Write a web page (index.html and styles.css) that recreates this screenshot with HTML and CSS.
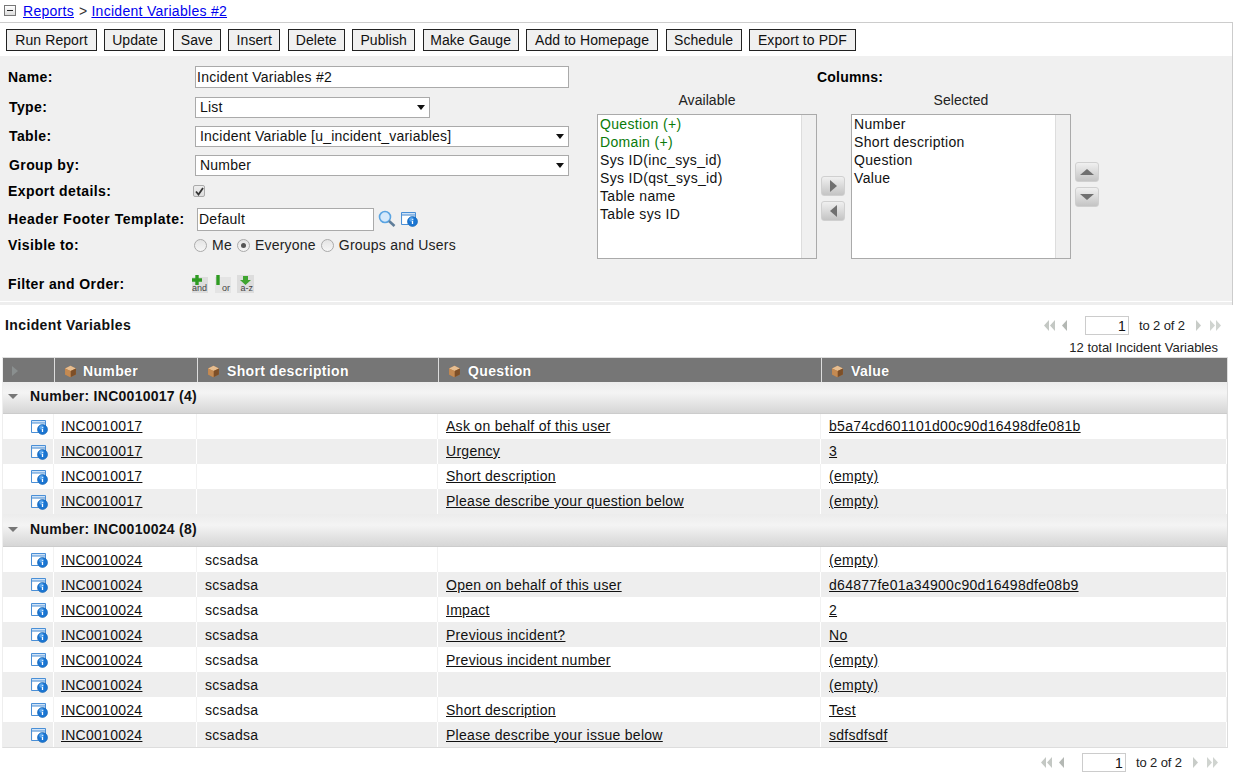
FILE: index.html
```html
<!DOCTYPE html>
<html lang="en">
<head>
<meta charset="utf-8">
<title>Incident Variables #2</title>
<link rel="stylesheet" href="styles.css">
</head>
<body>
<svg class="defs" width="0" height="0" aria-hidden="true">
  <symbol id="info" viewBox="0 0 18 16">
    <path d="M1.500 1.500h14v2.500h-14z" fill="#cfe3f7" stroke="#4a8fd6"/>
    <path d="M1.500 4v9.500h7M15.500 4v3" fill="none" stroke="#4a8fd6"/>
    <path d="M2.500 5h12v2h-5l-3 6h-4z" fill="#fff"/>
    <circle cx="12.500" cy="10.500" r="5" fill="#1a75d2" stroke="#0f5fb0" stroke-width=".6"/>
    <circle cx="11.500" cy="8.500" r="2.200" fill="#5ba6ec"/>
    <path d="M12.500 8.200v.9M12.500 10v3" stroke="#fff" stroke-width="1.300"/>
  </symbol>
  <symbol id="cube" viewBox="0 0 12 12">
    <path d="M6 .8l5 2.400v5.600l-5 2.600-5-2.600V3.200z" fill="#b9804a"/>
    <path d="M6 .8l5 2.400L6 5.600 1 3.200z" fill="#e6bd90"/>
    <path d="M6 5.600l5-2.400v5.600l-5 2.600z" fill="#7d4f28"/>
    <path d="M1 3.200l5 2.400v5.800l-5-2.600z" fill="#c48a52"/>
  </symbol>
  <symbol id="first" viewBox="0 0 13 13"><path d="M6 1v11L1 6.500zM12 1v11L7 6.500z" fill="#c4c8c4"/></symbol>
  <symbol id="prev" viewBox="0 0 7 13"><path d="M6 1v11L1 6.500z" fill="#b4b8b4"/></symbol>
  <symbol id="next" viewBox="0 0 7 13"><path d="M1 1v11l5-5.500z" fill="#c8ccc8"/></symbol>
  <symbol id="last" viewBox="0 0 13 13"><path d="M1 1v11l5-5.500zM7 1v11l5-5.500z" fill="#d0d4d0"/></symbol>
</svg>

<nav class="crumbs">
  <span class="collapse"></span>
  <a href="#">Reports</a> <span class="crumb-sep">&gt;</span> <a href="#">Incident Variables #2</a>
</nav>

<section class="panel">
  <div class="toolbar">
    <button class="btn">Run Report</button>
    <button class="btn">Update</button>
    <button class="btn">Save</button>
    <button class="btn">Insert</button>
    <button class="btn">Delete</button>
    <button class="btn">Publish</button>
    <button class="btn">Make Gauge</button>
    <button class="btn">Add to Homepage</button>
    <button class="btn">Schedule</button>
    <button class="btn">Export to PDF</button>
  </div>
  <div class="form">
    <div class="fields">
      <div class="row row-name"><label class="lbl">Name:</label><input class="text text-name" value="Incident Variables #2"></div>
      <div class="row row-type"><label class="lbl lbl-in">Type:</label><div class="sel sel-short"><select><option>List</option></select></div></div>
      <div class="row row-table"><label class="lbl lbl-in">Table:</label><div class="sel"><select><option>Incident Variable [u_incident_variables]</option></select></div></div>
      <div class="row row-group"><label class="lbl lbl-in">Group by:</label><div class="sel"><select><option>Number</option></select></div></div>
      <div class="row row-export"><label class="lbl">Export details:</label>
        <span class="check"><svg width="9" height="9" viewBox="0 0 9 9"><path d="M1 4.500l2.500 3L8 1" fill="none" stroke="#333" stroke-width="1.800"/></svg></span></div>
      <div class="row row-header"><label class="lbl lbl-wide">Header Footer Template:</label><input class="text text-hf" value="Default">
        <svg class="magnifier" width="18" height="18" viewBox="0 0 18 18"><circle cx="7" cy="7" r="5.500" fill="#d5e9fb" stroke="#5aa4e2" stroke-width="1.600"/><path d="M11 11l5.500 5" stroke="#5f7d99" stroke-width="2.600"/></svg>
        <svg class="ico-info ico-hf" width="18" height="16"><use href="#info"/></svg></div>
      <div class="row row-visible"><label class="lbl">Visible to:</label>
        <div class="radios">
          <span class="radio"></span><span class="radio-text">Me</span>
          <span class="radio on"></span><span class="radio-text">Everyone</span>
          <span class="radio"></span><span class="radio-text">Groups and Users</span>
        </div></div>
      <div class="row row-filter"><label class="lbl">Filter and Order:</label>
        <div class="filters">
          <span class="fbtn"><svg width="17" height="18" viewBox="0 0 17 18"><rect x="1" y="2" width="16" height="16" fill="#ddd"/><path d="M6 0v10M1 5h10" stroke="#2e9b22" stroke-width="3.400"/></svg><em class="ftext">and</em></span>
          <span class="fbtn"><svg width="17" height="18" viewBox="0 0 17 18"><rect x="1" y="2" width="16" height="16" fill="#e4e4e4"/><path d="M4 0v10" stroke="#2e9b22" stroke-width="3.400"/></svg><em class="ftext">or</em></span>
          <span class="fbtn"><svg width="17" height="18" viewBox="0 0 17 18"><rect x="0" y="0" width="17" height="18" fill="#ddd"/><path d="M6 1h5v4h3l-5.500 5L3 5h3z" fill="#3fa52f"/></svg><em class="ftext">a-z</em></span>
        </div></div>
    </div>
    <div class="columns">
      <div class="cols-title">Columns:</div>
      <div class="cols-body">
        <div class="col-box">
          <div class="col-head">Available</div>
          <div class="listbox"><ul class="list">
            <li class="green">Question (+)</li>
            <li class="green">Domain (+)</li>
            <li>Sys ID(inc_sys_id)</li>
            <li>Sys ID(qst_sys_id)</li>
            <li>Table name</li>
            <li>Table sys ID</li>
          </ul><div class="track"></div></div>
        </div>
        <div class="mover mover-mid">
          <span class="sq"><i class="tri tri-r"></i></span>
          <span class="sq"><i class="tri tri-l"></i></span>
        </div>
        <div class="col-box">
          <div class="col-head">Selected</div>
          <div class="listbox"><ul class="list">
            <li>Number</li>
            <li>Short description</li>
            <li>Question</li>
            <li>Value</li>
          </ul><div class="track"></div></div>
        </div>
        <div class="mover mover-end">
          <span class="sq"><i class="tri tri-u"></i></span>
          <span class="sq"><i class="tri tri-d"></i></span>
        </div>
      </div>
    </div>
  </div>
  <div class="panel-foot"></div>
</section>

<section class="report">
  <div class="report-top">
    <h2 class="report-title">Incident Variables</h2>
    <div class="report-meta">
      <div class="pager">
        <svg class="pg" width="13" height="13"><use href="#first"/></svg>
        <svg class="pg pg-prev" width="7" height="13"><use href="#prev"/></svg>
        <input class="pg-input" value="1">
        <span class="pg-text">to 2 of 2</span>
        <svg class="pg pg-next" width="7" height="13"><use href="#next"/></svg>
        <svg class="pg pg-last" width="13" height="13"><use href="#last"/></svg>
      </div>
      <div class="total">12 total Incident Variables</div>
    </div>
  </div>

  <table class="grid">
    <colgroup><col class="c0"><col class="c1"><col class="c2"><col class="c3"><col class="c4"></colgroup>
    <thead>
      <tr>
        <th><i class="tri tri-head"></i></th>
        <th class="th-number"><svg class="cube" width="13" height="13"><use href="#cube"/></svg>Number</th>
        <th><svg class="cube" width="13" height="13"><use href="#cube"/></svg>Short description</th>
        <th><svg class="cube" width="13" height="13"><use href="#cube"/></svg>Question</th>
        <th><svg class="cube" width="13" height="13"><use href="#cube"/></svg>Value</th>
      </tr>
    </thead>
    <tbody>
      <tr class="group group-first"><td colspan="5"><i class="tri tri-group"></i>Number: INC0010017 (4)</td></tr>
      <tr><td class="ic"><svg width="18" height="16"><use href="#info"/></svg></td><td class="num"><a href="#">INC0010017</a></td><td></td><td><a href="#">Ask on behalf of this user</a></td><td><a href="#">b5a74cd601101d00c90d16498dfe081b</a></td></tr>
      <tr class="alt"><td class="ic"><svg width="18" height="16"><use href="#info"/></svg></td><td class="num"><a href="#">INC0010017</a></td><td></td><td><a href="#">Urgency</a></td><td><a href="#">3</a></td></tr>
      <tr><td class="ic"><svg width="18" height="16"><use href="#info"/></svg></td><td class="num"><a href="#">INC0010017</a></td><td></td><td><a href="#">Short description</a></td><td><a href="#">(empty)</a></td></tr>
      <tr class="alt"><td class="ic"><svg width="18" height="16"><use href="#info"/></svg></td><td class="num"><a href="#">INC0010017</a></td><td></td><td><a href="#">Please describe your question below</a></td><td><a href="#">(empty)</a></td></tr>
    </tbody>
    <tbody class="block-b">
      <tr class="group"><td colspan="5"><i class="tri tri-group"></i>Number: INC0010024 (8)</td></tr>
      <tr><td class="ic"><svg width="18" height="16"><use href="#info"/></svg></td><td class="num"><a href="#">INC0010024</a></td><td>scsadsa</td><td></td><td><a href="#">(empty)</a></td></tr>
      <tr class="alt"><td class="ic"><svg width="18" height="16"><use href="#info"/></svg></td><td class="num"><a href="#">INC0010024</a></td><td>scsadsa</td><td><a href="#">Open on behalf of this user</a></td><td><a href="#">d64877fe01a34900c90d16498dfe08b9</a></td></tr>
      <tr><td class="ic"><svg width="18" height="16"><use href="#info"/></svg></td><td class="num"><a href="#">INC0010024</a></td><td>scsadsa</td><td><a href="#">Impact</a></td><td><a href="#">2</a></td></tr>
      <tr class="alt"><td class="ic"><svg width="18" height="16"><use href="#info"/></svg></td><td class="num"><a href="#">INC0010024</a></td><td>scsadsa</td><td><a href="#">Previous incident?</a></td><td><a href="#">No</a></td></tr>
      <tr><td class="ic"><svg width="18" height="16"><use href="#info"/></svg></td><td class="num"><a href="#">INC0010024</a></td><td>scsadsa</td><td><a href="#">Previous incident number</a></td><td><a href="#">(empty)</a></td></tr>
      <tr class="alt"><td class="ic"><svg width="18" height="16"><use href="#info"/></svg></td><td class="num"><a href="#">INC0010024</a></td><td>scsadsa</td><td></td><td><a href="#">(empty)</a></td></tr>
      <tr><td class="ic"><svg width="18" height="16"><use href="#info"/></svg></td><td class="num"><a href="#">INC0010024</a></td><td>scsadsa</td><td><a href="#">Short description</a></td><td><a href="#">Test</a></td></tr>
      <tr class="alt"><td class="ic"><svg width="18" height="16"><use href="#info"/></svg></td><td class="num"><a href="#">INC0010024</a></td><td>scsadsa</td><td><a href="#">Please describe your issue below</a></td><td><a href="#">sdfsdfsdf</a></td></tr>
    </tbody>
  </table>

  <div class="pager pager-bottom">
    <svg class="pg" width="13" height="13"><use href="#first"/></svg>
    <svg class="pg pg-prev" width="7" height="13"><use href="#prev"/></svg>
    <input class="pg-input" value="1">
    <span class="pg-text">to 2 of 2</span>
    <svg class="pg pg-next" width="7" height="13"><use href="#next"/></svg>
    <svg class="pg pg-last" width="13" height="13"><use href="#last"/></svg>
  </div>
</section>
</body>
</html>
```
FILE: styles.css
```css
* { box-sizing: border-box; }
html, body { margin: 0; padding: 0; background: #fff; }
body { font: 14px/16px "Liberation Sans", Arial, sans-serif; letter-spacing: .28px; color: #000; overflow: hidden; height: 779px; }
.defs { position: absolute; }
a { color: inherit; }

.crumbs { height: 22px; display: flex; align-items: center; padding: 0 0 1px 4px; white-space: pre; }
.crumbs a { color: #00e; }
.crumb-sep { margin: 0 4px 0 5px; color: #333; }
.collapse { width: 12px; height: 11px; margin-right: 7px; border: 1px solid #777; background: linear-gradient(#fff, #ddd); position: relative; }
.collapse::after { content: ""; position: absolute; left: 2px; top: 4px; width: 6px; height: 1px; background: #222; }

.panel { width: 1233px; border-top: 1px solid #ccc; border-right: 1px solid #ccc; }
.toolbar { height: 33px; padding: 6px 0 0 6px; display: grid; grid-template-columns: 91px 61px 48px 52px 57px 63px 96px 132px 76px 107px; column-gap: 7.440px; align-items: start; background: #fff; }
.btn { height: 22px; padding: 0; border: 1px solid #222; background: #f0f0f0; font: 14px/18px "Liberation Sans", Arial, sans-serif; letter-spacing: .08px; color: #111; white-space: nowrap; }

.form { height: 245px; background: #f0f0f0; display: flex; }
.fields { width: 597px; padding-left: 8px; flex: none; }
.row { display: flex; align-items: center; }
.lbl { width: 187px; flex: none; font-weight: bold; white-space: nowrap; letter-spacing: .4px; }
.lbl-wide { letter-spacing: .56px; }
.lbl-in { padding-left: 1px; }
.row-name { height: 34px; padding-top: 8px; }
.row-type { height: 34px; }
.row-table { height: 24px; }
.row-group { height: 34px; }
.row-export { height: 18px; }
.row-header { height: 38px; }
.row-visible { height: 14px; }
.row-filter { height: 49px; padding-top: 15px; }
.text { height: 22px; border: 1px solid #aaa; background: #fff; padding: 0 1px; font: 14px "Liberation Sans", Arial, sans-serif; letter-spacing: .25px; color: #111; }
.text-name { width: 374px; }
.text-hf { width: 177px; height: 23px; margin-left: 2px; }
.sel { width: 374px; height: 21px; position: relative; }
.sel-short { width: 235px; }
.sel select { appearance: none; width: 100%; height: 100%; border: 1px solid #aaa; border-radius: 0; background: #fff; padding: 0 0 0 4px; font: 14px "Liberation Sans", Arial, sans-serif; letter-spacing: .22px; color: #111; }
.sel::after { content: ""; position: absolute; right: 5px; top: 8px; border: 4px solid transparent; border-top: 5px solid #111; border-bottom: 0; }
.check { width: 12px; height: 12px; margin-left: -2px; border: 1px solid #aaa; border-radius: 2px; background: linear-gradient(#eee, #ddd); display: flex; align-items: center; justify-content: center; }
.magnifier { margin-left: 4px; }
.ico-hf { margin-left: 4px; }
.radios { display: flex; align-items: center; margin-left: -1px; color: #222; letter-spacing: .22px; }
.radio { width: 13px; height: 13px; border: 1px solid #aaa; border-radius: 50%; background: linear-gradient(#e4e4e4, #f6f6f6); margin-right: 5px; position: relative; }
.radio.on::after { content: ""; position: absolute; left: 3px; top: 3px; width: 5px; height: 5px; border-radius: 50%; background: #555; }
.radio-text { margin-right: 5px; }
.filters { display: flex; gap: 6px; margin-left: -4px; }
.fbtn { width: 17px; height: 18px; position: relative; display: block; }
.fbtn svg { display: block; }
.ftext { position: absolute; font: 9px/9px "Liberation Sans", sans-serif; letter-spacing: 0; color: #444; right: 1px; bottom: 0; }

.columns { flex: 1; display: flex; flex-direction: column; }
.cols-title { font-weight: bold; padding-left: 220px; height: 36px; padding-top: 13px; letter-spacing: .2px; }
.cols-body { display: flex; align-items: flex-start; }
.col-box { width: 220px; flex: none; }
.col-head { text-align: center; height: 22px; color: #222; line-height: 16px; letter-spacing: .05px; }
.listbox { height: 145px; border: 1px solid #aaa; background: #fff; display: flex; }
.list { list-style: none; margin: 0; padding: 0 0 0 2px; flex: 1; line-height: 18px; color: #111; letter-spacing: .33px; }
.green { color: #0a7a0a; }
.track { width: 15px; background: #f0f0f0; border-left: 1px solid #ddd; }
.mover { width: 34px; flex: none; display: flex; flex-direction: column; gap: 5px; padding-left: 4px; }
.mover-mid { padding-top: 84px; }
.mover-end { padding-top: 70px; }
.sq { width: 24px; height: 20px; border: 1px solid #d0d0d0; border-radius: 3px; background: linear-gradient(#f0f0f0, #c4c4c4); display: flex; align-items: center; justify-content: center; }
.tri { display: block; width: 0; height: 0; border-style: solid; border-color: transparent; }
.tri-r { border-width: 6px 0 6px 7px; border-left-color: #707070; }
.tri-l { border-width: 6px 7px 6px 0; border-right-color: #707070; }
.tri-u { border-width: 0 7px 6px; border-bottom-color: #707070; }
.tri-d { border-width: 6px 7px 0; border-top-color: #707070; }

.panel-foot { height: 4px; background: #eee; border-top: 1px solid #fff; }

.report-top { height: 52px; display: flex; justify-content: space-between; }
.report-title { margin: 0; padding: 12px 0 0 5px; font-size: 14px; line-height: 16px; font-weight: bold; color: #111; letter-spacing: .39px; }
.report-meta { width: 180px; margin-right: 15px; padding-top: 11px; display: flex; flex-direction: column; align-items: flex-end; }
.pager { display: flex; align-items: center; color: #222; height: 19px; }
.pg { flex: none; display: block; }
.pg-prev { margin-left: 5px; }
.pg-next { margin-left: 10px; }
.pg-last { margin-left: 7px; }
.pg-input { width: 44px; height: 19px; margin: 0 10px 0 17px; border: 1px solid #ccc; background: #fff; padding: 0 2px; text-align: right; font: 14px "Liberation Sans", Arial, sans-serif; color: #111; }
.pg-text { font-size: 13px; letter-spacing: -.1px; white-space: nowrap; }
.total { margin: 5px 4px 0 0; font-size: 13px; letter-spacing: 0; color: #222; white-space: nowrap; }

.grid { margin-left: 2px; width: 1226px; table-layout: fixed; border-collapse: separate; border-spacing: 0; border-top: 1px solid #ddd; border-bottom: 1px solid #ddd; border-right: 1px solid #ddd; border-left: 1px solid #eee; }
.c0 { width: 51px; }
.c1 { width: 143px; }
.c2 { width: 241px; }
.c3 { width: 383px; }
.grid th { height: 24px; background: #767676; color: #fff; font-weight: bold; text-align: left; padding: 1px 0 0 9px; border-left: 1px solid #ddd; white-space: nowrap; text-shadow: 0 0 1px #555; letter-spacing: .35px; }
.grid th:first-child { border-left: 0; padding-left: 9px; }
.cube { margin-right: 7px; vertical-align: -2px; }
.th-number .cube { margin-right: 6px; }
.tri-head { border-width: 5px 0 5px 6px; border-left-color: #8a8f8f; }
.grid td { height: 25px; padding: 0 0 1px 8px; border-right: 1px solid #f2f2f2; color: #111; white-space: nowrap; overflow: hidden; }
.grid td.num { padding-left: 7px; }
.grid .block-b td { padding-bottom: 0; }
.grid td.ic, .grid .block-b td.ic { padding: 1px 0 0 27px; line-height: 0; }
.alt td { background: #eee; border-right-color: #fff; }
.grid .group td, .grid .block-b .group td { height: 33px; padding: 0 0 3px 5px; background: linear-gradient(#ececec, #f4f4f4 35%, #d6d6d6); border-right: 0; border-bottom: 1px solid #ccc; font-weight: bold; color: #111; letter-spacing: .27px; }
.grid .group-first td { height: 32px; padding-bottom: 4px; }
.tri-group { display: inline-block; margin-right: 12px; vertical-align: 2px; border-width: 5px 5px 0; border-top-color: #777; }

.pager-bottom { justify-content: flex-end; margin-top: 5px; width: 1219px; }
```
